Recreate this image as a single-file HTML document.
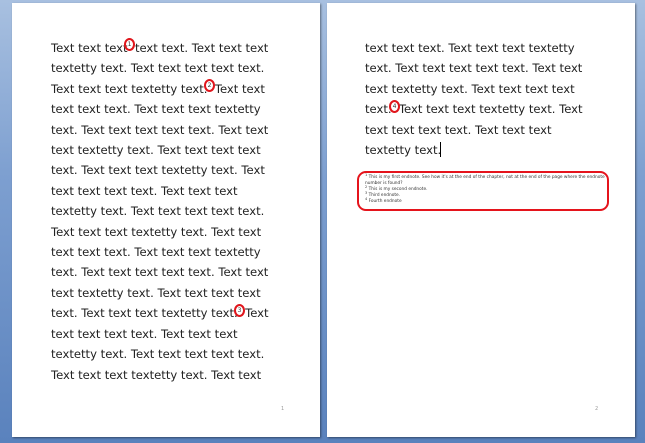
<!DOCTYPE html>
<html><head><style>
body{margin:0;width:645px;height:443px;overflow:hidden;background:linear-gradient(180deg,#a8c0e0 0%,#7d9fd0 40%,#5a82bd 100%);position:relative;font-family:"DejaVu Sans","Liberation Sans",sans-serif}
.page{position:absolute;background:#fff;top:3px;height:434px;box-shadow:1px 1px 2px rgba(0,0,0,.45)}
.t{position:absolute;font-size:11.6px;color:#222;line-height:20.4px;white-space:pre}
.c{position:absolute;width:11px;height:13px;border:2px solid #e0161c;border-radius:50%;box-sizing:border-box;font-size:6px;line-height:9px;text-align:center;color:#333}
.pn{position:absolute;font-size:5px;color:#999}
.box{position:absolute;left:357px;top:171px;width:252px;height:40px;border:2.5px solid #e5141c;border-radius:9px;box-sizing:border-box}
.fn{position:absolute;left:365px;top:175px;font-size:4.3px;line-height:6px;color:#333;white-space:pre}
.fn sup{font-size:3.5px;line-height:0;vertical-align:2px}
</style></head><body>
<div class="page" style="left:12px;width:308px"></div>
<div class="page" style="left:327px;width:308px"></div>
<div class="t" style="left:51px;top:38px">Text text text  text text. Text text text
textetty text. Text text text text text.
Text text text textetty text.  Text text
text text text. Text text text textetty
text. Text text text text text. Text text
text textetty text. Text text text text
text. Text text text textetty text. Text
text text text text. Text text text
textetty text. Text text text text text.
Text text text textetty text. Text text
text text text. Text text text textetty
text. Text text text text text. Text text
text textetty text. Text text text text
text. Text text text textetty text.  Text
text text text text. Text text text
textetty text. Text text text text text.
Text text text textetty text. Text text</div>
<div class="c" style="left:124px;top:38px">1</div>
<div class="c" style="left:204px;top:79px">2</div>
<div class="c" style="left:234px;top:304px">3</div>
<div class="t" style="left:365px;top:38px">text text text. Text text text textetty
text. Text text text text text. Text text
text textetty text. Text text text text
text.  Text text text textetty text. Text
text text text text. Text text text
textetty text.</div>
<div style="position:absolute;left:440px;top:142px;width:1px;height:15px;background:#000"></div>
<div class="c" style="left:389px;top:100px">4</div>
<div class="box"></div>
<div class="fn"><sup>1</sup> This is my first endnote. See how it's at the end of the chapter, not at the end of the page where the endnote
number is found?
<sup>2</sup> This is my second endnote.
<sup>3</sup> Third endnote.
<sup>4</sup> Fourth endnote</div>
<div class="pn" style="left:281px;top:406px">1</div>
<div class="pn" style="left:595px;top:406px">2</div>
</body></html>
